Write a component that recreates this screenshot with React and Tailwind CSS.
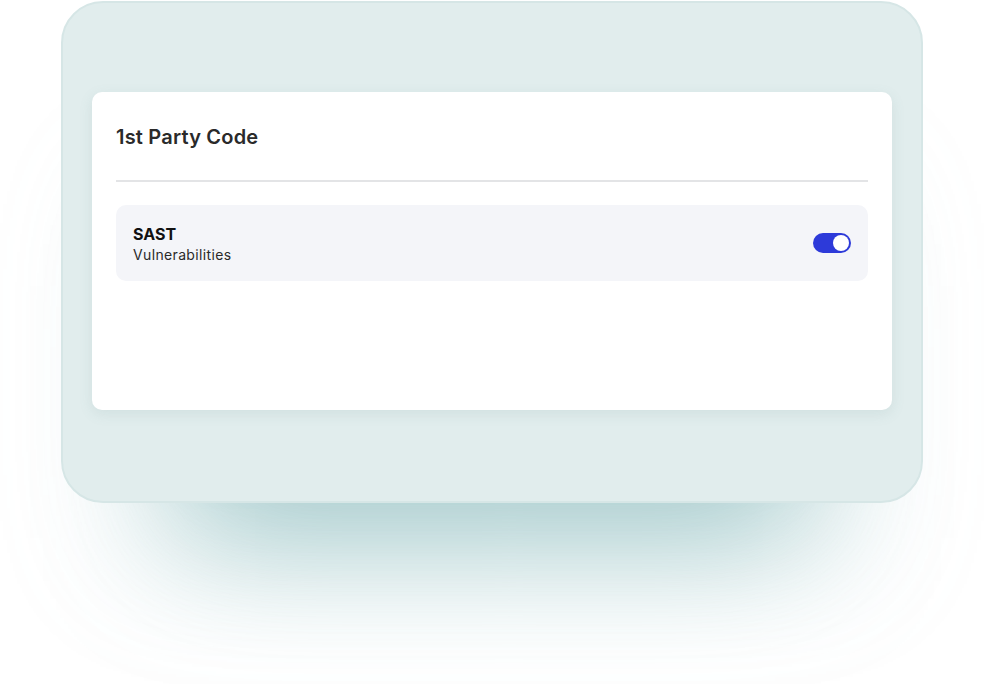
const Toggle = ({ on = true }) => (
  <div
    className={`flex h-[20px] w-[38px] items-center rounded-full p-[2px] ${
      on ? 'justify-end bg-[#2d3ad9]' : 'justify-start bg-gray-300'
    }`}
  >
    <div className="h-[16px] w-[16px] rounded-full bg-white" />
  </div>
);

const App = () => {
  return (
    <div className="h-[684px] w-[984px] overflow-hidden bg-white pl-[61px] pt-[1px] font-['Inter',sans-serif]">
      {/* Outer frame */}
      <div className="w-[862px] rounded-[42px] border-2 border-[#d6e6e6] bg-[#e1eded] px-[29px] pt-[89px] pb-[91px] shadow-[0_160px_130px_-125px_rgba(110,170,172,0.6),0_120px_120px_-60px_rgba(150,195,198,0.18)]">
        {/* Card */}
        <div className="h-[318px] rounded-[10px] bg-white px-[24px] pt-[31px] shadow-[0_4px_14px_rgba(90,130,130,0.12)]">
          <h2 className="text-[20px] font-semibold leading-[28px] tracking-[0.2px] text-[#2a2a2a]">
            1st Party Code
          </h2>
          <div className="mt-[29px] h-[2px] bg-[#e3e4e6]" />

          <div className="mt-[23px] flex h-[76px] items-center justify-between rounded-[10px] bg-[#f4f5f9] pl-[17px] pr-[17px]">
            <div className="pt-[2px]">
              <div className="text-[16px] font-bold leading-[20px] text-[#111]">SAST</div>
              <div className="mt-[1px] text-[14px] leading-[20px] tracking-[0.35px] text-[#2a2a2a]">
                Vulnerabilities
              </div>
            </div>
            <Toggle on />
          </div>
        </div>
      </div>
    </div>
  );
};

export default App;
